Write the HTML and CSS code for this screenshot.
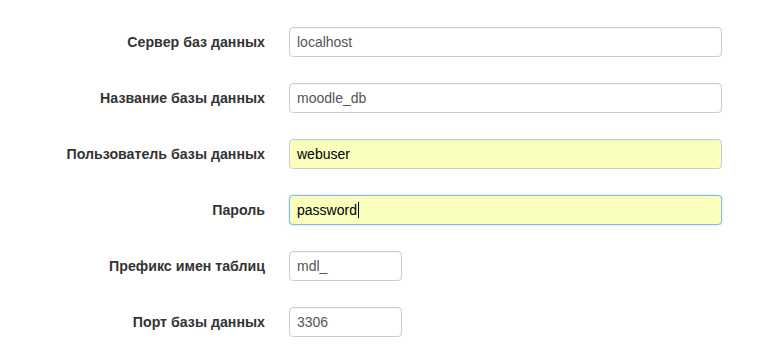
FILE: index.html
```html
<!DOCTYPE html>
<html lang="ru">
<head>
<meta charset="utf-8">
<link rel="stylesheet" href="styles.css">
</head>
<body>
<form class="form">
  <div class="row">
    <label class="label">Сервер баз данных</label>
    <div class="field wide">localhost</div>
  </div>
  <div class="row">
    <label class="label">Название базы данных</label>
    <div class="field wide">moodle_db</div>
  </div>
  <div class="row">
    <label class="label">Пользователь базы данных</label>
    <div class="field wide filled">webuser</div>
  </div>
  <div class="row">
    <label class="label">Пароль</label>
    <div class="field wide filled focus">password<span class="caret"></span></div>
  </div>
  <div class="row">
    <label class="label">Префикс имен таблиц</label>
    <div class="field short">mdl_</div>
  </div>
  <div class="row">
    <label class="label">Порт базы данных</label>
    <div class="field short">3306</div>
  </div>
</form>
</body>
</html>
```
FILE: styles.css
```css
html, body {
  margin: 0;
  padding: 0;
  background: #fff;
}
body {
  font-family: "Liberation Sans", Arial, sans-serif;
  color: #333;
}
.form {
  display: flex;
  flex-direction: column;
  gap: 26px;
  padding-top: 27px;
}
.row {
  display: grid;
  grid-template-columns: 265px auto;
  column-gap: 24px;
  align-items: center;
}
.label {
  text-align: right;
  font-size: 14.2px;
  font-weight: bold;
  color: #333;
}
.field {
  box-sizing: border-box;
  height: 30px;
  border: 1px solid #ccc;
  border-radius: 4px;
  padding: 0 7px;
  font-size: 14px;
  line-height: 28px;
  color: #555;
  background: #fff;
  box-shadow: inset 0 1px 1px rgba(0,0,0,0.04);
  display: flex;
  align-items: center;
}
.wide { width: 433px; }
.short { width: 113px; }
.filled {
  background: #faffbd;
  color: #000;
}
.focus {
  border-color: #8cb7ee;
  box-shadow: 0 0 2px rgba(102,175,233,0.6);
}
.caret {
  display: inline-block;
  width: 1px;
  height: 16px;
  background: #000;
  margin-left: 1px;
}
```
